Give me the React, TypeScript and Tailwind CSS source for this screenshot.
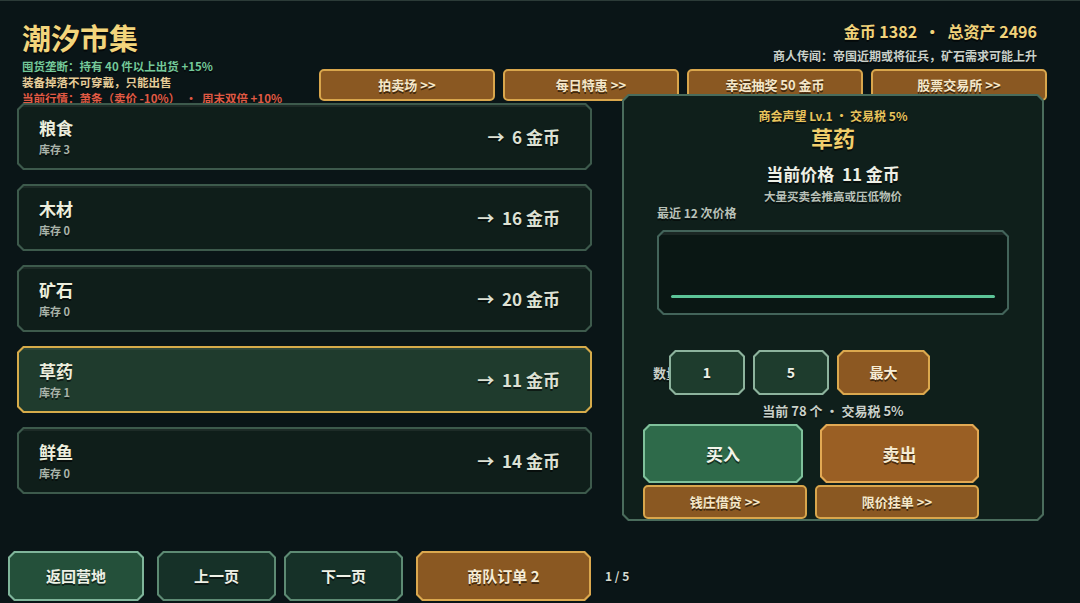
import React from "react";

// 切角边框：外层给边框色，内层给底色
const cut6 =
  "[clip-path:polygon(6px_0,calc(100%_-_6px)_0,100%_6px,100%_calc(100%_-_6px),calc(100%_-_6px)_100%,6px_100%,0_calc(100%_-_6px),0_6px)]";
const cut5 =
  "[clip-path:polygon(5px_0,calc(100%_-_5px)_0,100%_5px,100%_calc(100%_-_5px),calc(100%_-_5px)_100%,5px_100%,0_calc(100%_-_5px),0_5px)]";
const shadow = "[text-shadow:0_2px_0_rgba(0,0,0,0.55)]";

const Chamfer = ({ edge, fill, className = "", inner = "", children }: any) => (
  <div className={`${cut6} p-[2px] ${edge} ${className}`}>
    <div className={`${cut5} h-full w-full ${fill} ${inner}`}>{children}</div>
  </div>
);

const goods = [
  { name: "粮食", stock: 3, price: 6 },
  { name: "木材", stock: 0, price: 16 },
  { name: "矿石", stock: 0, price: 20 },
  { name: "草药", stock: 1, price: 11, active: true },
  { name: "鲜鱼", stock: 0, price: 14 },
];

const BrownBtn = ({ label, className = "" }: any) => (
  <div
    className={`flex items-center justify-center rounded-[5px] border-2 border-[#d9a64c] bg-[#8a5822] text-[13px] font-bold text-[#f4e7c9] ${shadow} ${className}`}
  >
    {label}
  </div>
);

export default function App() {
  return (
    <div className="relative h-[603px] w-[1080px] overflow-hidden border-t border-[#2c3b38] bg-[#0a1517] font-['Noto_Sans_CJK_SC','Noto_Sans',sans-serif]">
      {/* 顶部 */}
      <div className="flex h-[94px] justify-between">
        <div className="pl-[22px] pt-[19px]">
          <div className={`text-[29px] font-bold leading-[34px] text-[#f3d57c] ${shadow}`}>潮汐市集</div>
          <div className={`mt-[4px] text-[11.5px] font-bold leading-[16px] ${shadow}`}>
            <div className="text-[#74c99a]">囤货垄断：持有 40 件以上出货 +15%</div>
            <div className="text-[#e6cc98]">装备掉落不可穿戴，只能出售</div>
            <div className="whitespace-pre text-[#e05a44]">当前行情：萧条（卖价 -10%）  ·  周末双倍 +10%</div>
          </div>
        </div>
        <div className="flex flex-col items-end pr-[33px] pt-[19px]">
          <div className={`whitespace-pre pr-[10px] text-[16px] font-bold leading-[22px] text-[#f1d27a] ${shadow}`}>
            金币 1382  ·  总资产 2496
          </div>
          <div className={`mt-[6px] pr-[10px] text-[12px] font-bold leading-[16px] text-[#c9d0c9] ${shadow}`}>
            商人传闻：帝国近期或将征兵，矿石需求可能上升
          </div>
          <div className="mt-[5px] flex gap-[8px]">
            {["拍卖场 >>", "每日特惠 >>", "幸运抽奖 50 金币", "股票交易所 >>"].map((t) => (
              <BrownBtn key={t} label={t} className="h-[32px] w-[176px]" />
            ))}
          </div>
        </div>
      </div>

      {/* 主体 */}
      <div className="flex gap-[30px] pl-[17px]">
        <div className="flex w-[575px] flex-col gap-[14px] pt-[8px]">
          {goods.map((g) => (
            <Chamfer
              key={g.name}
              edge={g.active ? "bg-[#d6ab4a]" : "bg-[#3d5a4c]"}
              fill={g.active ? "bg-[#1f3b2d]" : "bg-[#0f1e1a]"}
              className="h-[67px]"
              inner="flex items-center justify-between pl-[20px] pr-[30px] shadow-[inset_0_2px_0_rgba(255,255,255,0.06)]"
            >
              <div className="flex flex-col">
                <div className={`text-[17px] font-bold leading-[20px] text-[#eceedd] ${shadow}`}>{g.name}</div>
                <div className={`mt-[4px] text-[11px] font-bold leading-[14px] text-[#a9b4aa] ${shadow}`}>
                  库存 {g.stock}
                </div>
              </div>
              <div className={`whitespace-pre text-[17px] font-bold text-[#dde1d4] ${shadow}`}>→  {g.price} 金币</div>
            </Chamfer>
          ))}
        </div>

        {/* 详情面板 */}
        <Chamfer edge="bg-[#4a6c5c]" fill="bg-[#0f1f1b]" className="-mt-[1px] h-[427px] w-[422px]" inner="flex flex-col">
          <div className="flex flex-col items-center pt-[12px]">
            <div className={`text-[12px] font-bold leading-[16px] text-[#e9c45c] ${shadow}`}>商会声望 Lv.1 · 交易税 5%</div>
            <div className={`-mt-[1px] text-[22px] font-bold leading-[28px] text-[#f1cf6c] ${shadow}`}>草药</div>
            <div className={`mt-[12px] whitespace-pre text-[17px] font-bold leading-[22px] text-[#eef0e6] ${shadow}`}>
              当前价格  11 金币
            </div>
            <div className={`mt-[3px] text-[11.5px] font-bold leading-[16px] text-[#b9c2b9] ${shadow}`}>
              大量买卖会推高或压低物价
            </div>
          </div>
          <div className={`ml-[33px] mt-[1px] text-[12px] font-bold leading-[16px] text-[#b9c2b9] ${shadow}`}>
            最近 12 次价格
          </div>
          <Chamfer
            edge="bg-[#43645a]"
            fill="bg-[#0a1714]"
            className="ml-[33px] mt-[9px] h-[88px] w-[352px]"
            inner="flex flex-col px-[12px] shadow-[inset_0_3px_0_rgba(255,255,255,0.07)]"
          >
            <div className="mt-[63px] h-[3px] w-full rounded-full bg-[#5cc498]" />
          </Chamfer>

          <div className="ml-[29px] mt-[35px] flex items-center">
            <div className={`w-[16px] overflow-visible whitespace-nowrap text-[13px] font-bold text-[#c9d0c9] ${shadow}`}>
              数量
            </div>
            <div className="relative flex gap-[8px]">
              <Chamfer edge="bg-[#8db39d]" fill="bg-[#1e3c2d]" className="h-[45px] w-[76px]" inner={`flex items-center justify-center text-[14px] font-bold text-[#eef0e6] ${shadow}`}>
                1
              </Chamfer>
              <Chamfer edge="bg-[#8db39d]" fill="bg-[#1e3c2d]" className="h-[45px] w-[76px]" inner={`flex items-center justify-center text-[14px] font-bold text-[#eef0e6] ${shadow}`}>
                5
              </Chamfer>
              <Chamfer edge="bg-[#dba84e]" fill="bg-[#8c5822]" className="h-[45px] w-[93px]" inner={`flex items-center justify-center text-[14px] font-bold text-[#f6ecd4] ${shadow}`}>
                最大
              </Chamfer>
            </div>
          </div>
          <div className={`mt-[8px] text-center text-[13px] font-bold leading-[16px] text-[#c9d0c9] ${shadow}`}>
            当前 78 个 · 交易税 5%
          </div>

          <div className="ml-[19px] mt-[5px] flex gap-[17px]">
            <Chamfer edge="bg-[#7fc19b]" fill="bg-[#2e6a4a]" className="h-[59px] w-[160px]" inner={`flex items-center justify-center text-[17px] font-bold text-[#f2f4ea] ${shadow}`}>
              买入
            </Chamfer>
            <Chamfer edge="bg-[#e2a953]" fill="bg-[#9a5f24]" className="h-[59px] w-[159px]" inner={`flex items-center justify-center text-[17px] font-bold text-[#f6ecd4] ${shadow}`}>
              卖出
            </Chamfer>
          </div>
          <div className="ml-[19px] mt-[2px] flex gap-[8px]">
            <BrownBtn label="钱庄借贷 >>" className="h-[34px] w-[164px] bg-[#7b4f1f]" />
            <BrownBtn label="限价挂单 >>" className="h-[34px] w-[164px] bg-[#7b4f1f]" />
          </div>
        </Chamfer>
      </div>

      {/* 底部 */}
      <div className="mt-[30px] flex items-center pl-[8px]">
        <Chamfer edge="bg-[#7fb59a]" fill="bg-[#24503a]" className="h-[50px] w-[136px]" inner={`flex items-center justify-center text-[15px] font-bold text-[#eef0e6] ${shadow}`}>
          返回营地
        </Chamfer>
        <Chamfer edge="bg-[#5d8a73]" fill="bg-[#163128]" className="ml-[13px] h-[50px] w-[119px]" inner={`flex items-center justify-center text-[15px] font-bold text-[#eef0e6] ${shadow}`}>
          上一页
        </Chamfer>
        <Chamfer edge="bg-[#5d8a73]" fill="bg-[#163128]" className="ml-[8px] h-[50px] w-[119px]" inner={`flex items-center justify-center text-[15px] font-bold text-[#eef0e6] ${shadow}`}>
          下一页
        </Chamfer>
        <Chamfer edge="bg-[#dba84e]" fill="bg-[#8a5822]" className="ml-[13px] h-[50px] w-[175px]" inner={`flex items-center justify-center text-[15px] font-bold text-[#f6ecd4] ${shadow}`}>
          商队订单 2
        </Chamfer>
        <div className={`ml-[14px] text-[12px] font-bold text-[#d6dbd2] ${shadow}`}>1 / 5</div>
      </div>
    </div>
  );
}
